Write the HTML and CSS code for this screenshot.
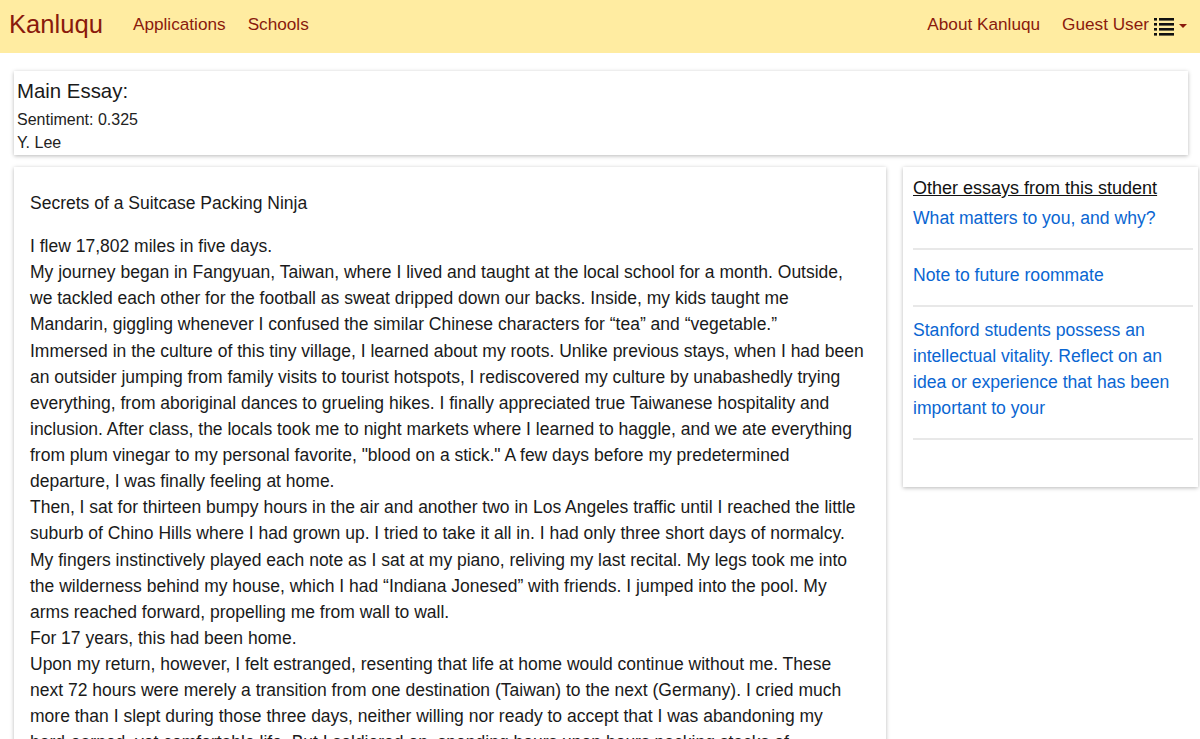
FILE: index.html
```html
<!DOCTYPE html>
<html>
<head>
<meta charset="utf-8">
<link rel="stylesheet" href="styles.css">
</head>
<body>
<nav class="navbar">
  <div class="nav-left">
    <a class="brand" href="#">Kanluqu</a>
    <a class="nav-link" href="#">Applications</a>
    <a class="nav-link" href="#">Schools</a>
  </div>
  <div class="nav-right">
    <a class="nav-link" href="#">About Kanluqu</a>
    <a class="nav-link user" href="#">Guest User
      <svg class="list-icon" width="20" height="20" viewBox="0 0 20 20">
        <g fill="#111">
          <rect x="0" y="2" width="3" height="2.6"/><rect x="5" y="2" width="15" height="2.6"/>
          <rect x="0" y="7" width="3" height="2.6"/><rect x="5" y="7" width="15" height="2.6"/>
          <rect x="0" y="12" width="3" height="2.6"/><rect x="5" y="12" width="15" height="2.6"/>
          <rect x="0" y="17" width="3" height="2.6"/><rect x="5" y="17" width="15" height="2.6"/>
        </g>
      </svg>
      <span class="caret"></span>
    </a>
  </div>
</nav>

<main class="page">
  <section class="card header-card">
    <h1 class="essay-heading">Main Essay:</h1>
    <div class="meta">Sentiment: 0.325</div>
    <div class="meta">Y. Lee</div>
  </section>

  <div class="columns">
    <article class="card essay-card">
      <h2 class="essay-title">Secrets of a Suitcase Packing Ninja</h2>
      <p>I flew 17,802 miles in five days.</p>
      <p>My journey began in Fangyuan, Taiwan, where I lived and taught at the local school for a month. Outside, we tackled each other for the football as sweat dripped down our backs. Inside, my kids taught me Mandarin, giggling whenever I confused the similar Chinese characters for “tea” and “vegetable.”</p>
      <p>Immersed in the culture of this tiny village, I learned about my roots. Unlike previous stays, when I had been an outsider jumping from family visits to tourist hotspots, I rediscovered my culture by unabashedly trying everything, from aboriginal dances to grueling hikes. I finally appreciated true Taiwanese hospitality and inclusion. After class, the locals took me to night markets where I learned to haggle, and we ate everything from plum vinegar to my personal favorite, "blood on a stick." A few days before my predetermined departure, I was finally feeling at home.</p>
      <p>Then, I sat for thirteen bumpy hours in the air and another two in Los Angeles traffic until I reached the little suburb of Chino Hills where I had grown up. I tried to take it all in. I had only three short days of normalcy. My fingers instinctively played each note as I sat at my piano, reliving my last recital. My legs took me into the wilderness behind my house, which I had “Indiana Jonesed” with friends. I jumped into the pool. My arms reached forward, propelling me from wall to wall.</p>
      <p>For 17 years, this had been home.</p>
      <p>Upon my return, however, I felt estranged, resenting that life at home would continue without me. These next 72 hours were merely a transition from one destination (Taiwan) to the next (Germany). I cried much more than I slept during those three days, neither willing nor ready to accept that I was abandoning my hard-earned, yet comfortable life. But I soldiered on, spending hours upon hours packing stacks of belongings into a single suitcase.</p>
    </article>

    <aside class="card side-card">
      <h3 class="side-heading">Other essays from this student</h3>
      <ul class="essay-list">
        <li><a href="#">What matters to you, and why?</a></li>
        <li><a href="#">Note to future roommate</a></li>
        <li><a href="#">Stanford students possess an intellectual vitality. Reflect on an idea or experience that has been important to your</a></li>
      </ul>
    </aside>
  </div>
</main>
</body>
</html>
```

FILE: styles.css
```css
html {
  overflow-x: hidden;
}

body {
  margin: 0;
  font-family: "Liberation Sans", Arial, Helvetica, sans-serif;
  color: #1e1e1e;
  background: #fff;
}

a {
  text-decoration: none;
}

.navbar {
  height: 53px;
  background: #ffeca1;
  display: flex;
  justify-content: space-between;
  align-items: center;
  padding: 0 13px 4px 9px;
  box-sizing: border-box;
}

.nav-left,
.nav-right {
  display: flex;
  align-items: center;
}

.brand {
  font-size: 25.6px;
  color: #8a1a0c;
  margin-right: 19px;
}

.nav-link {
  font-size: 17.2px;
  color: #8a1a0c;
  padding: 0 11px;
}

.nav-right .nav-link:last-child {
  padding-right: 0;
}

.user {
  display: flex;
  align-items: center;
}

.list-icon {
  margin-left: 5px;
  margin-top: 2px;
}

.caret {
  width: 0;
  height: 0;
  margin-left: 5px;
  margin-top: 2px;
  border-left: 4px solid transparent;
  border-right: 4px solid transparent;
  border-top: 4px solid #8a1a0c;
}

.page {
  padding: 18px 12px 0 14px;
}

.card {
  background: #fff;
  box-shadow: 0 1px 4px rgba(0, 0, 0, 0.28);
}

.header-card {
  padding: 7px 3px 1px;
}

.essay-heading {
  margin: 0 0 4px;
  font-size: 20.4px;
  font-weight: normal;
  line-height: 26px;
  color: #1a1a1a;
}

.meta {
  font-size: 16px;
  line-height: 23px;
  color: #222;
}

.columns {
  display: flex;
  align-items: flex-start;
  gap: 17px;
  margin-top: 12px;
}

.essay-card {
  width: 872px;
  flex: none;
  box-sizing: border-box;
  padding: 23px 20px 20px 16px;
  font-size: 17.5px;
  line-height: 26.125px;
  color: #1a1a1a;
}

.essay-title {
  margin: 0 0 17px;
  font-size: 17.5px;
  font-weight: normal;
  line-height: 26px;
}

.essay-card p {
  margin: 0;
}

.side-card {
  width: 295px;
  flex: none;
  box-sizing: border-box;
  padding: 11px 5px 47px 10px;
  margin-right: -14px;
}

.side-heading {
  margin: 0;
  font-size: 18px;
  font-weight: normal;
  line-height: 20px;
  text-decoration: underline;
  color: #111;
}

.essay-list {
  list-style: none;
  margin: 0;
  padding: 0;
}

.essay-list li {
  padding: 12px 0 17px 0;
  border-bottom: 2px solid #e8e8e8;
  font-size: 17.6px;
  line-height: 26px;
}

.essay-list li:first-child {
  padding-top: 7px;
}

.essay-list li:last-child {
  padding-top: 10px;
  padding-bottom: 17px;
}

.essay-list a {
  color: #0a66d2;
}
```
